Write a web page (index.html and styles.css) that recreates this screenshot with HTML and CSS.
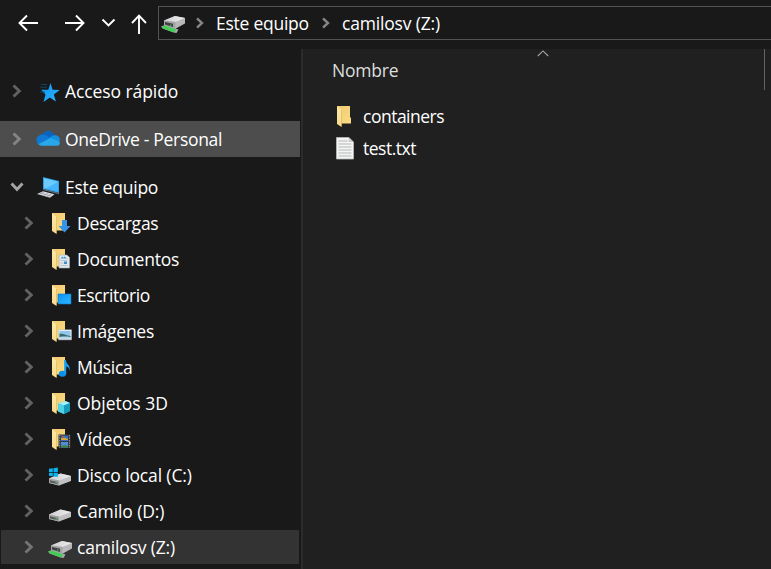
FILE: index.html
```html
<!DOCTYPE html>
<html lang="es">
<head>
<meta charset="utf-8">
<title>camilosv (Z:)</title>
<link rel="stylesheet" href="styles.css">
</head>
<body>
<svg class="defs" width="0" height="0" aria-hidden="true">
  <defs>
    <linearGradient id="gFolder" x1="0" y1="0" x2="1" y2="1"><stop offset="0" stop-color="#f0ca70"/><stop offset="1" stop-color="#fbdc84"/></linearGradient>
    <linearGradient id="gFlap" x1="0" y1="0" x2="0" y2="1"><stop offset="0" stop-color="#ffe9a6"/><stop offset="1" stop-color="#f8d98a"/></linearGradient>
    <linearGradient id="gBlue" x1="0" y1="0" x2="1" y2="1"><stop offset="0" stop-color="#0c93f0"/><stop offset="1" stop-color="#2fb4ff"/></linearGradient>
    <linearGradient id="gTop" x1="0" y1="0" x2="1" y2="0"><stop offset="0" stop-color="#cfcfd1"/><stop offset="1" stop-color="#ececee"/></linearGradient>
    <symbol id="chev" viewBox="0 0 10 14"><path d="M1.500 1.500 7.300 7l-5.800 5.500" fill="none" stroke="currentColor" stroke-width="2.900"/></symbol>
    <symbol id="folder" viewBox="0 0 24 24">
      <path d="M4 1h13v11l1 1v5.500H8z" fill="url(#gFolder)"/>
      <path d="M4 1l4.500 4v17L4 19z" fill="url(#gFlap)"/>
      <path d="M8.500 5v16.500" stroke="#d9b45c" stroke-width=".6"/>
    </symbol>
    <symbol id="drive" viewBox="0 0 24 24">
      <path d="M1 14.500 12.500 9.500 23 12v5L11 21.500 1 19z" fill="#c0c0c2"/>
      <path d="M1 14.500 12.500 9.500 23 12 11 16.500z" fill="url(#gTop)"/>
      <path d="M1 14.500l10 2v5L1 19z" fill="#a2a2a4"/>
      <path d="M2 16.300l7.500 1.700v2L2 18.500z" fill="#5a5c5f"/>
      <path d="M7.500 18.300H9v1.300H7.500z" fill="#36c84a"/>
    </symbol>
    <symbol id="netdrive" viewBox="0 0 24 24">
      <path d="M0 15.500 4 14l13.500 4.500-2 3.500-3-.5L1.500 17.500z" fill="#a7aaa8"/>
      <path d="M1 15.500 5 14l10 4-1 3-3-.2L2 17.500z" fill="#42ce55"/>
      <path d="M3 9.500 14 5l10 2v5.500L14 18 3 14z" fill="#b8b8ba"/>
      <path d="M3 9.500 14 5l10 2-9.500 4z" fill="url(#gTop)"/>
      <path d="M3 9.500l11.500 1.500L14 18 3 14z" fill="#a2a2a4"/>
      <path d="M4 11l8 1.700V16L4 13.500z" fill="#3f4042"/>
      <path d="M9 13.500h1.500v1.300H9z" fill="#36b84a"/>
    </symbol>
  </defs>
</svg>

<header class="toolbar">
  <svg class="nav" width="158" height="49" fill="none" stroke="#fff" stroke-width="1.900">
    <path d="M38 23H20M27 15.500 19.500 23l7.500 7.500"/>
    <path d="M65 23h18M76 15.500l7.500 7.500-7.500 7.500"/>
    <path d="M102.500 19.500l6 6 6-6"/>
    <path d="M139 34V16M132 23l7-7.300 7 7.300"/>
  </svg>
  <div class="address">
    <svg class="icon" viewBox="0 0 24 24"><use href="#netdrive"/></svg>
    <svg class="sep"><use href="#chev"/></svg>
    <span class="crumb first">Este equipo</span>
    <svg class="sep second"><use href="#chev"/></svg>
    <span class="crumb">camilosv (Z:)</span>
  </div>
</header>

<div class="body">
  <nav class="tree">
    <div class="row root gap"><svg class="chev"><use href="#chev"/></svg>
      <svg class="icon" viewBox="0 0 24 24"><path d="M14.500 3l2.100 6.800 7.100.1-5.900 4.700 2.100 7-6.100-4-6.300 4.300 2-7.500-4.400-4.600h7.200z" fill="url(#gBlue)"/><path d="M5 4.500h6M4 7.200h7M4 12h5" stroke="#124c72" stroke-width=".8"/></svg>
      <span class="t-quick">Acceso rápido</span></div>
    <div class="row root gap hover"><svg class="chev"><use href="#chev"/></svg>
      <svg class="icon cloud" viewBox="0 0 24 24"><path d="M6.500 8C8 3.200 15 1.700 18.500 8l-4 7z" fill="#0b64bd"/><path d="M5 18.500C-1 17.500-1.500 8.300 6.500 7.500c2.500-.2 4 1 6 2.500l5 3-6 5z" fill="#0f78d4"/><path d="M17 8.500c5-1.200 7 2 7 5l-4 2-7.500-4.500z" fill="#1490df"/><path d="M2.500 17 14.500 11l9 3.500c1 2-.3 4.200-2.500 4.200H6c-1.500 0-3-.7-3.500-1.700z" fill="#28a8ea"/></svg>
      <span class="t-one">OneDrive - Personal</span></div>
    <div class="row root pc"><svg class="chev open"><use href="#chev"/></svg>
      <svg class="icon" viewBox="0 0 24 24"><path d="M7 1l16 4v12L7 13z" fill="#2e9fe8"/><path d="M8 2.200l14 3.600v10L8 12z" fill="#46b5fc"/><path d="M8 2.200l14 3.600L10 12.500l-2-.5z" fill="#6dcaff"/><path d="M7 13l16 4v1.200L7 14z" fill="#64717d"/><path d="M1 18l6-2.800 11.500 3-4.500 3.500z" fill="#d8dadd"/><path d="M4 17l11.500 3.300M8 16l-5 2.500M12 17l-5 3M15 18l-4 3" stroke="#8b9198" stroke-width=".6"/></svg>
      <span class="t-pc">Este equipo</span></div>

    <div class="row"><svg class="chev"><use href="#chev"/></svg>
      <svg class="icon" viewBox="0 0 24 24"><use href="#folder"/><path d="M14 8h5v6h3.500L16.500 20.500 10.500 14H14z" fill="#3694e8"/></svg>
      <span class="t-down">Descargas</span></div>
    <div class="row"><svg class="chev"><use href="#chev"/></svg>
      <svg class="icon" viewBox="0 0 24 24"><use href="#folder"/><path d="M11 7h8l2.500 2.500V20H11z" fill="#dfe6ec" stroke="#a9b3ba" stroke-width=".6"/><path d="M12.500 10.500l2-2 1 1.500 1-1.500 2.500 2z" fill="#3996d4"/><path d="M12.500 12.500h7M12.500 15h3M12.500 17.500h7" stroke="#b4c4d0"/><path d="M16 13.500h3v2.500h-3z" fill="#3f8fc6"/></svg>
      <span class="t-docs">Documentos</span></div>
    <div class="row"><svg class="chev"><use href="#chev"/></svg>
      <svg class="icon" viewBox="0 0 24 24"><use href="#folder"/><path d="M10 10h13v10H10z" fill="url(#gBlue)" stroke="#087ac9" stroke-width=".6"/></svg>
      <span class="t-desk">Escritorio</span></div>
    <div class="row"><svg class="chev"><use href="#chev"/></svg>
      <svg class="icon" viewBox="0 0 24 24"><use href="#folder"/><path d="M10.500 9.800H23.500v10H10.500z" fill="#f5f7f8" stroke="#aab4bc" stroke-width=".5"/><path d="M11.500 11h11v7.500h-11z" fill="#91c5eb"/><path d="M11.500 13.500c5 .3 7 2.200 11 2.500v1h-11z" fill="#356967"/><path d="M11.500 17c4-.7 7-.5 11 0v1.500h-11z" fill="#b6d8e9"/></svg>
      <span class="t-img">Imágenes</span></div>
    <div class="row"><svg class="chev"><use href="#chev"/></svg>
      <svg class="icon" viewBox="0 0 24 24"><use href="#folder"/><ellipse cx="14.500" cy="17.800" rx="3.700" ry="3" fill="#0b91ed"/><path d="M16.200 18V4H18c0 4.500 4.800 4.500 3.500 11-.3-2.800-1.300-4.300-3.300-4.500V18z" fill="#159df4"/></svg>
      <span class="t-music">Música</span></div>
    <div class="row"><svg class="chev"><use href="#chev"/></svg>
      <svg class="icon" viewBox="0 0 24 24"><use href="#folder"/><path d="M10 11.500l7.500-2.500 4.500 2v8l-6 3-6-2.500z" fill="#29b9d6"/><path d="M10 11.500l7.500-2.500 4.500 2-6 2.500z" fill="#a7eff8"/><path d="M16 13.500l6-2.500v8l-6 3z" fill="#159bbd"/><path d="M10 11.500l6 2v8.500l-6-2.500z" fill="#4fd1e6"/></svg>
      <span class="t-3d">Objetos 3D</span></div>
    <div class="row"><svg class="chev"><use href="#chev"/></svg>
      <svg class="icon" viewBox="0 0 24 24"><use href="#folder"/><path d="M10.500 6.500h12v13.500h-12z" fill="#34373c"/><path d="M13 7.500h7V13h-7z" fill="#376ebd"/><path d="M13 14h7v5.500h-7z" fill="#4e8bd8"/><path d="M13 10.500l3-1 4 1.500v1h-7z" fill="#d3a638"/><path d="M14 8h2v1.500h-2z" fill="#c34e35"/><path d="M13 18l4-1 3 1v1.500h-7z" fill="#3e8646"/><path d="M11.700 7v13M21.400 7v13" stroke="#a0a5aa" stroke-dasharray="1.300 1.200"/></svg>
      <span class="t-video">Vídeos</span></div>
    <div class="row"><svg class="chev"><use href="#chev"/></svg>
      <svg class="icon" viewBox="0 0 24 24"><use href="#drive"/><path d="M1 4.800l3.800-.5v3.600H1zM5.500 4.200l4.300-.6v4.300H5.500zM1 8.700h3.800v3.600L1 11.800zM5.500 8.700h4.300V13l-4.300-.6z" fill="#08b5ee"/></svg>
      <span class="t-c">Disco local (C:)</span></div>
    <div class="row"><svg class="chev"><use href="#chev"/></svg>
      <svg class="icon" viewBox="0 0 24 24"><use href="#drive"/></svg>
      <span class="t-d">Camilo (D:)</span></div>
    <div class="row selected"><svg class="chev"><use href="#chev"/></svg>
      <svg class="icon" viewBox="0 0 24 24"><use href="#netdrive"/></svg>
      <span class="t-z">camilosv (Z:)</span></div>
  </nav>

  <main class="files">
    <div class="columns">
      <span class="t-name">Nombre</span>
      <svg class="sort" width="12" height="7"><path d="M.8 6 6 .9 11.200 6" fill="none" stroke="#a5a5a5" stroke-width="1.100"/></svg>
    </div>
    <div class="file"><svg class="icon" viewBox="0 0 24 24"><use href="#folder"/></svg><span class="t-cont">containers</span></div>
    <div class="file"><svg class="icon" viewBox="0 0 24 24"><path d="M3.500 .5h12.300L20.500 5v17h-17z" fill="#f4f4f4" stroke="#b9b9b9" stroke-width=".8"/><path d="M15.800.5V5h4.700z" fill="#c9c9c9"/><path d="M5.500 4h9M5.500 7h13M5.500 10h13M5.500 13h13M5.500 16h13M5.500 19h13" stroke="#b4b8b8" stroke-width="1"/></svg><span class="t-test">test.txt</span></div>
  </main>
</div>
</body>
</html>
```

FILE: styles.css
```css
* { box-sizing: border-box; }
body {
  margin: 0;
  width: 771px;
  height: 569px;
  overflow: hidden;
  background: #191919;
  color: #fff;
  font: 17.5px/36px "Open Sans", "Noto Sans", sans-serif;
  white-space: nowrap;
}
.defs { position: absolute; }
svg { display: block; flex: none; }
.icon { width: 24px; height: 24px; }

.toolbar { display: flex; height: 49px; }
.address {
  display: flex;
  align-items: center;
  flex: 1;
  height: 34px;
  margin-top: 6px;
  padding-left: 2px;
  border: 1px solid #535353;
  border-right: 0;
}
.crumb { letter-spacing: -.18px; }
.crumb.first { width: 93px; letter-spacing: -.25px; }
.sep { width: 10px; height: 14px; margin: 0 11px 0 10px; color: #858585; transform: scale(.85); }
.sep.second { margin: 0 11px 0 12px; }

.body { display: flex; height: 520px; }
.tree { width: 301px; padding-top: 24px; }
.row { display: flex; align-items: center; height: 36px; padding-left: 24px; }
.row.root { padding-left: 12px; }
.row.gap { margin-bottom: 12px; }
.row.hover { width: 300px; background: #4d4d4d; }
.row.selected {
  width: 298px;
  height: 34px;
  margin: 1px 0 0 1px;
  padding-left: 23px;
  background: #333;
}
.chev { width: 10px; height: 14px; margin-right: 14px; color: #626262; }
.hover .chev { color: #858585; }
.selected .chev { color: #757575; }
.chev.open { color: #a5a5a5; transform: rotate(90deg); }
.row .icon { margin-top: 2px; }
.row .cloud { margin-top: 0; }
.row span { margin-left: 5px; }

.t-quick { letter-spacing: -.08px; }
.t-one { letter-spacing: -.31px; }
.t-pc { letter-spacing: -.22px; }
.t-down { letter-spacing: -.25px; }
.t-docs { letter-spacing: -.2px; }
.t-desk { letter-spacing: -.4px; }
.t-img { letter-spacing: -.25px; }
.t-music { letter-spacing: -.33px; }
.t-c { letter-spacing: -.13px; }
.t-d { letter-spacing: -.1px; }
.t-z { letter-spacing: -.17px; }
.t-name { letter-spacing: -.2px; }
.t-cont { letter-spacing: -.5px; }
.t-test { letter-spacing: -.5px; }

.files { flex: 1; border-left: 2px solid #2b2b2b; background: #202020; }
.columns {
  display: flex;
  justify-content: space-between;
  height: 41px;
  width: 462px;
  padding: 0 215px 0 29px;
  border-right: 1px solid #636363;
  color: #dedede;
  line-height: 43px;
  margin-bottom: 11px;
}
.sort { margin-top: 1px; }
.file { display: flex; align-items: center; height: 32px; padding-left: 30px; }
.file span { margin: -2px 0 0 6px; }
```
